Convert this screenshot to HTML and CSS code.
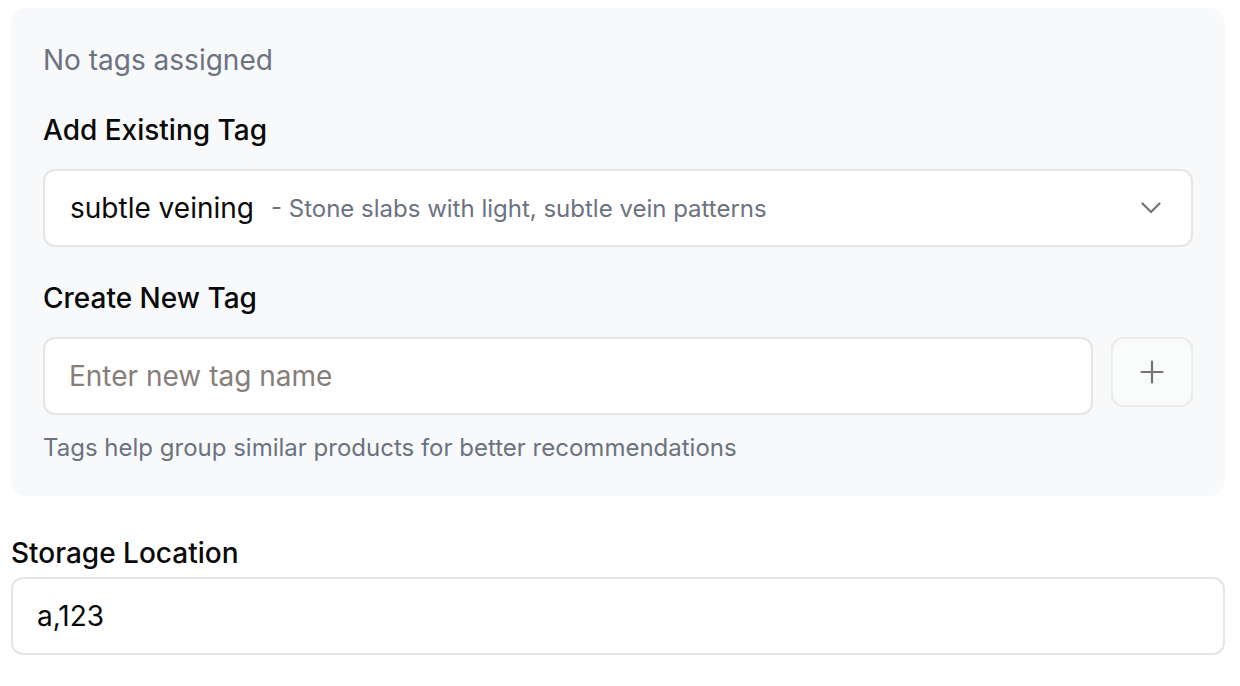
FILE: index.html
```html
<!DOCTYPE html>
<html lang="en">
<head>
<meta charset="utf-8">
<title>Tags</title>
<link rel="stylesheet" href="styles.css">
</head>
<body>
<div class="page">
  <section class="tags-panel">
    <p class="empty">No tags assigned</p>
    <div class="field">
      <label class="label">Add Existing Tag</label>
      <div class="select" role="combobox">
        <span class="select-value">subtle veining</span>
        <span class="select-desc">- Stone slabs with light, subtle vein patterns</span>
        <svg class="chevron" width="20" height="12" viewBox="0 0 20 12" aria-hidden="true"><path d="M1.5 1.5 L10 10 L18.5 1.5" fill="none" stroke="#737373" stroke-width="2.2" stroke-linecap="round" stroke-linejoin="round"/></svg>
      </div>
    </div>
    <div class="field field-new">
      <label class="label">Create New Tag</label>
      <div class="new-row">
        <input class="input" type="text" placeholder="Enter new tag name">
        <button class="add-btn" type="button" aria-label="Add tag">
          <svg width="24" height="24" viewBox="0 0 24 24" aria-hidden="true"><path d="M12 1.5 V22.5 M1.5 12 H22.5" fill="none" stroke="#737373" stroke-width="2.2" stroke-linecap="round"/></svg>
        </button>
      </div>
      <p class="help">Tags help group similar products for better recommendations</p>
    </div>
  </section>
  <div class="storage">
    <label class="label storage-label">Storage Location</label>
    <input class="input storage-input" type="text" value="a,123">
  </div>
</div>
</body>
</html>
```
FILE: styles.css
```css
* { box-sizing: border-box; }
html, body { margin: 0; padding: 0; background: #ffffff; }
body {
  font-family: Inter, "Noto Sans", sans-serif;
  color: #0a0a0a;
  width: 1240px;
  height: 686px;
  overflow: hidden;
}
.page {
  padding: 8px 15px 0 11px;
}
.tags-panel {
  background: #f8f9fb;
  border-radius: 16px;
  padding: 32px 32px 32px 32px;
}
.empty {
  margin: 0 0 30px 0;
  font-size: 28px;
  line-height: 40px;
  color: #6b7280;
}
.label {
  display: block;
  font-size: 28px;
  line-height: 40px;
  font-weight: 500;
  color: #0a0a0a;
  margin-bottom: 19px;
}
.select {
  height: 78px;
  background: #ffffff;
  border: 2px solid #e5e5e5;
  border-radius: 12px;
  display: flex;
  align-items: center;
  padding: 0 30px 0 25px;
}
.select-value {
  font-size: 28px;
  color: #0a0a0a;
}
.select-desc {
  font-size: 24px;
  color: #6b7280;
  margin-left: 17px;
  flex: 1;
}
.chevron { display: block; }
.field-new { margin-top: 31px; }
.new-row {
  display: flex;
  align-items: flex-start;
  gap: 18px;
}
.input {
  display: block;
  flex: 1;
  height: 78px;
  background: #ffffff;
  border: 2px solid #e5e5e5;
  border-radius: 12px;
  padding: 0 24px;
  font-family: Inter, "Noto Sans", sans-serif;
  font-size: 28px;
  color: #0a0a0a;
  outline: none;
}
.input::placeholder { color: #78716c; opacity: 0.9; }
.add-btn {
  width: 82px;
  height: 70px;
  flex: none;
  background: #fafbfb;
  border: 2px solid #ececec;
  border-radius: 12px;
  display: flex;
  align-items: center;
  justify-content: center;
  padding: 0;
}
.add-btn svg { display: block; }
.help {
  margin: 17px 0 0 0;
  font-size: 24px;
  line-height: 32px;
  color: #6b7280;
}
.storage { margin-top: 37px; }
.storage-label { margin-bottom: 4px; }
.storage-input { width: 100%; padding-left: 24px; }
```
